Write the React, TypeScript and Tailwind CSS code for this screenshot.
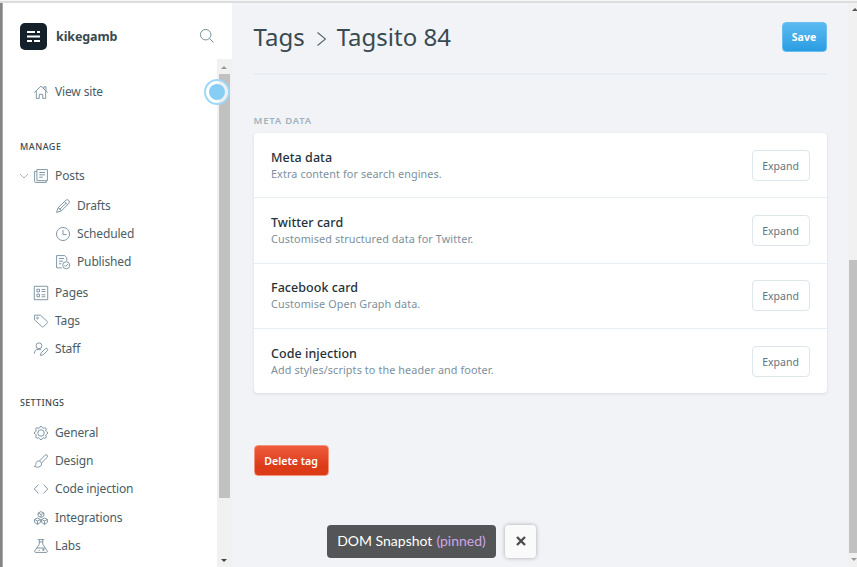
import type { ReactNode } from "react";

const icons: Record<string, ReactNode> = {
  home: <path d="M.5 13 12 2l11.500 11M4 10.500V23h5v-7h6v7h5V10.500M17 6.500V3h3.500v7" />,
  posts: <><path d="M5 1h18v19H5zM5 4H1v17.500A1.500 1.500 0 0 0 2.500 23H21v-3" /><path d="M9 6h10M9 10h10M9 14h6" /></>,
  pencil: <path d="m1 23 2.500-8L17 2q2.500-2 5 .5 2 2.500 0 5L9 20.500zM3.500 15q3.500.5 5.500 5.500M14.500 4.500l5.500 5.500M17.500 7 6 18" />,
  clock: <><circle cx="12" cy="12" r="11.200" /><path d="M12 5v8h6" /></>,
  published: <><path d="M10 22H1V1h14l3.500 3.500V10M5 6h9M5 10.500h7M5 15h4" /><circle cx="17.500" cy="17.500" r="6" /><path d="m14.500 17.500 2 2 4-4" /></>,
  pages: <><path d="M.5.500h23v23H.5zM5 5.500h4.500V10H5zM5 14h4.500v4.500H5z" /><path d="M13 6h6.500M13 9.500h6.500M13 15h6.500M13 18.500h6.500" /></>,
  tag: <><path d="M1 2v8l13 12q1 1 2 0l7-7q1-1 0-2L11 2z" /><circle cx="6" cy="7" r="1.500" /></>,
  staff: <><circle cx="8.500" cy="6.500" r="5" /><path d="M.5 20c0-5 3-7.500 8-7.500 2 0 3 .3 4 1M11 23l1.300-4.500 7-7q1.700-1.500 3.500 0 1.500 1.800 0 3.500l-7 7z" /></>,
  gear: <><path d="M9.500 3Q10 .500 12 .5t2.500 2.500q.5 1.500 2.500.5 2-1 3.300.2t.2 3.300q-1 2 .5 2.500Q23.500 10 23.500 12t-2.500 2.500q-1.500.5-.5 2.500t-.2 3.300-3.300.2q-2-1-2.500.5Q14 23.500 12 23.500t-2.500-2.500Q9 19.500 7 20.500t-3.300-.2-.2-3.300-.5-2.500Q.5 14 .5 12T3 9.500Q4.500 9 3.500 7t.2-3.300 3.300-.2T9.500 3z" /><circle cx="12" cy="12" r="5.500" /></>,
  brush: <path d="M9.500 12 19 2q2-1.500 3.500 0t0 3.500L13 15.500zM9.500 12.500c-3-1.500-5.500.5-6 3.500-.4 3-1 4.500-3 5.500 6 2 11 1 12-2.500.5-2 .5-3 0-4" />,
  code: <path d="m7.500 4.500-7 7.500 7 7.500M16.500 4.500l7 7.500-7 7.500" />,
  cubes: <path d="m12 1 5 2.500v5L12 11 7 8.500v-5zM7 3.500 12 6l5-2.500M12 6v5M6 12l5 2.500v5L6 23l-5-3.500v-5zM1 14.500 6 17l5-2.500M6 17v6M18 12l5 2.500v5L18 23l-5-3.500v-5zM13 14.500l5 2.500 5-2.500M18 17v6" />,
  flask: <><path d="M6.500 1h11M9 1v8L1 21q0 2 2 2h18q2 0 2-2L15 9V1M5 15.500h14M9 5h6" /><path d="M8 19.500h2M14 18.500h4M16 16.500v4" /></>,
};

function Icon({ name }: { name: string }) {
  return (
    <svg viewBox="0 0 24 24" className="size-3.5 shrink-0 overflow-visible" fill="none" stroke="#7890a0" strokeWidth="1.6" strokeLinejoin="round">
      {icons[name]}
    </svg>
  );
}

function Item({ icon, label, className = "pl-[31px]" }: { icon: string; label: string; className?: string }) {
  return (
    <div className={`flex h-7 items-center gap-[7px] text-[12px] tracking-[-0.15px] text-[#4b5d64] ${className}`}>
      <Icon name={icon} />
      <span className="whitespace-nowrap">{label}</span>
    </div>
  );
}

function Sidebar() {
  return (
    <aside className="relative flex w-[229px] shrink-0 flex-col bg-white">
      <header className="flex h-14 shrink-0 items-center pl-[17px] pr-[18px] pt-[11px]">
        <svg viewBox="0 0 27 27" className="size-[27px]">
          <rect width="27" height="27" rx="5" fill="#15212a" />
          <path d="M7 9h8M17 9h3M7 13.500h13M7 18h5M14 18h6" stroke="#fff" strokeWidth="2" />
        </svg>
        <span className="ml-[9px] pt-0.5 text-[12.500px] font-bold tracking-[-0.1px] text-[#394a50]">kikegamb</span>
        <svg viewBox="0 0 16 16" className="-mt-px ml-auto size-3.5 overflow-visible" fill="none" stroke="#738a94" strokeWidth="1.1">
          <circle cx="6.500" cy="6.500" r="6" /><path d="m11 11 4.500 4.500" />
        </svg>
      </header>
      <div className="flex min-h-0 flex-1">
        <nav className="flex-1 overflow-hidden">
          <Item icon="home" label="View site" className="mt-[19px] pl-[31px]" />
          <h4 className="mt-[31px] h-5 pl-[17px] text-[9px] font-medium leading-5 tracking-[0.5px] text-[#394a50]">MANAGE</h4>
          <div className="mt-[5px] flex h-7 items-center text-[12px] tracking-[-0.13px] text-[#4b5d64]">
            <svg viewBox="0 0 8 5" className="ml-[17px] h-[5px] w-2 overflow-visible" fill="none" stroke="#a6b6be"><path d="m0 0 4 4 4-4" /></svg>
            <span className="ml-[6px] flex items-center gap-[7px]"><Icon name="posts" />Posts</span>
          </div>
          <Item icon="pencil" label="Drafts" className="mt-0.5 pl-[53px]" />
          <Item icon="clock" label="Scheduled" className="pl-[53px]" />
          <Item icon="published" label="Published" className="pl-[53px]" />
          <Item icon="pages" label="Pages" className="mt-[3px] pl-[31px]" />
          <Item icon="tag" label="Tags" />
          <Item icon="staff" label="Staff" />
          <h4 className="mt-[30px] h-5 pl-[17px] text-[9px] font-medium leading-5 tracking-[0.3px] text-[#394a50]">SETTINGS</h4>
          <Item icon="gear" label="General" className="mt-[6px] pl-[31px]" />
          <Item icon="brush" label="Design" />
          <Item icon="code" label="Code injection" />
          <Item icon="cubes" label="Integrations" className="mt-px pl-[31px]" />
          <Item icon="flask" label="Labs" />
        </nav>
        <div className="flex w-[15px] shrink-0 flex-col bg-[#f1f1f1]">
          <span className="ml-1 mt-[7px] w-1.5 border-x-[3px] border-b-[3px] border-x-transparent border-b-[#999]" />
          <span className="ml-0.5 mt-[5px] h-[424px] w-[11px] bg-[#c1c1c1]" />
          <span className="mb-[5px] ml-1 mt-auto w-1.5 border-x-[3px] border-t-[3px] border-x-transparent border-t-[#444]" />
        </div>
      </div>
      <span className="absolute left-[201px] top-[76px] flex size-[26px] items-center justify-center rounded-full border-2 border-[#9fd8f6] bg-white/75">
        <span className="size-4 rounded-full bg-[#87cef5]" />
      </span>
    </aside>
  );
}

const cards = [
  { title: "Meta data", text: "Extra content for search engines." },
  { title: "Twitter card", text: "Customised structured data for Twitter." },
  { title: "Facebook card", text: "Customise Open Graph data." },
  { title: "Code injection", text: "Add styles/scripts to the header and footer." },
];

export default function App() {
  return (
    <div className="relative flex h-[567px] w-[857px] flex-col overflow-hidden bg-[#f2f3f7] font-['Noto_Sans',sans-serif]">
      <div className="h-[3px] shrink-0 border-b-2 border-[#dcdddf] bg-[#f6f6f6]" />
      <div className="flex min-h-0 flex-1">
        <div className="w-[3px] shrink-0 border-r border-[#aaa] bg-[#858585]" />
        <Sidebar />
        <main className="flex-1 pl-[21.500px] pr-[21.500px]">
          <header className="flex h-[72px] items-center justify-between border-b-2 border-[#e9eef4]">
            <h2 className="-mt-[2px] flex items-center whitespace-nowrap text-[24px] text-[#394a50]">
              Tags
              <svg viewBox="0 0 9 14" className="ml-3 mr-[11px] mt-1 h-3.5 w-[9px]" fill="none" stroke="#52636a" strokeWidth="1.1"><path d="m.5.500 8 6.500-8 6.500" /></svg>
              Tagsito 84
            </h2>
            <button className="mb-[3px] h-[30px] w-[45px] rounded border border-[#69bdf0] bg-linear-to-b from-[#5abaf0] to-[#289de2] pt-0.5 text-[10.500px] font-bold text-white">Save</button>
          </header>
          <h4 className="mt-[35px] h-5 text-[9.500px] font-semibold leading-[21px] tracking-[0.8px] text-[#a0b2bc]">META DATA</h4>
          <section className="mt-[3px] h-[260px] divide-y divide-[#e9f0f4] rounded bg-white shadow-[0_1px_3px_rgba(40,60,90,.13)]">
            {cards.map((card) => (
              <div key={card.title} className="flex h-[65.300px] items-center justify-between pl-[17.500px] pr-[17px]">
                <div className="whitespace-nowrap">
                  <h3 className="text-[12.500px] font-medium leading-4 tracking-[0.05px] text-[#263238]">{card.title}</h3>
                  <p className="text-[10.800px] leading-[15px] tracking-[0.110px] text-[#7c909c]">{card.text}</p>
                </div>
                <button className="h-[31px] w-[58px] rounded border border-[#dde6eb] bg-white pt-[3px] text-[10.500px] text-[#60757e]">Expand</button>
              </div>
            ))}
          </section>
          <button className="mt-[52px] h-[31px] w-[75px] rounded border border-[#f2937d] bg-linear-to-b from-[#ee5b3c] to-[#dc3b18] to-70% pt-0.5 text-[10.600px] font-semibold text-white">Delete tag</button>
        </main>
        <div className="flex w-[9px] shrink-0 flex-col bg-[#f1f1f1]">
          <span className="ml-1 mt-[5px] border-x-[3px] border-b-[3px] border-x-transparent border-b-[#555]" />
          <span className="ml-px mt-[249px] h-[293px] bg-[#c1c1c1]" />
          <span className="ml-[3px] mt-[5px] w-1.5 border-x-[3px] border-t-[3px] border-x-transparent border-t-[#999]" />
        </div>
      </div>
      <div className="absolute left-[327px] top-[525px] flex items-start gap-[9px] font-['Lato',sans-serif]">
        <div className="flex h-[33px] w-[169px] items-center justify-center gap-1 whitespace-nowrap rounded bg-[#535556] pb-0.5 text-[14px] text-white">
          <span>DOM Snapshot</span><span className="text-[#cda6e6]">(pinned)</span>
        </div>
        <div className="flex h-[33px] w-[31px] items-center justify-center rounded bg-[#fafafa] pb-px shadow-[0_0_4px_rgba(0,0,0,.3)]">
          <svg viewBox="0 0 10 10" className="size-2.5" stroke="#4b4b4b" strokeWidth="2.300"><path d="m1 1 8 8M9 1 1 9" /></svg>
        </div>
      </div>
    </div>
  );
}
